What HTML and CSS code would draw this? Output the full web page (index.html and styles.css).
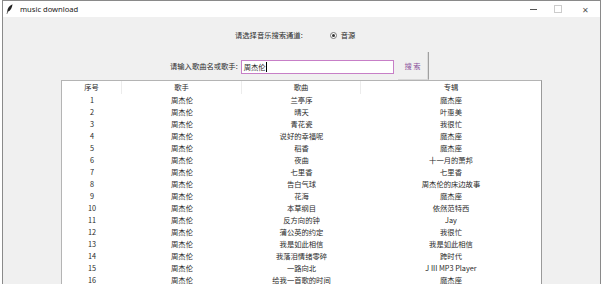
FILE: index.html
```html
<!DOCTYPE html>
<html>
<head>
<meta charset="utf-8">
<link rel="stylesheet" href="styles.css">
</head>
<body>
<div class="window">
  <div class="titlebar">
    <svg class="feather" width="7" height="10" viewBox="0 0 7 10"><path d="M6.5 0.3 C3.5 1.5 1.5 4 1.2 7.5 L0.6 9.8 L1.3 9.8 L1.8 7.8 C4.5 6.8 6.2 4 6.5 0.3 Z" fill="#222"/></svg>
    <span class="title">music download</span>
    <div class="controls">
      <span class="ctl min"></span>
      <span class="ctl max"></span>
      <span class="ctl close">✕</span>
    </div>
  </div>
  <div class="content">
    <div class="row-source">
      <span class="label">请选择音乐搜索通道:</span>
      <span class="radio"><span class="dot"></span></span>
      <span class="radio-text">音源</span>
    </div>
    <div class="row-search">
      <span class="label">请输入歌曲名或歌手:</span>
      <div class="entry">周杰伦<span class="caret"></span></div>
      <button class="search-btn">搜索</button>
    </div>
    <div class="table">
      <div class="thead">
        <div class="th">序号</div><div class="th">歌手</div><div class="th">歌曲</div><div class="th last">专辑</div>
      </div>
      <div class="tbody">
        <div class="td">1</div><div class="td">周杰伦</div><div class="td">兰亭序</div><div class="td">魔杰座</div>
        <div class="td">2</div><div class="td">周杰伦</div><div class="td">晴天</div><div class="td">叶惠美</div>
        <div class="td">3</div><div class="td">周杰伦</div><div class="td">青花瓷</div><div class="td">我很忙</div>
        <div class="td">4</div><div class="td">周杰伦</div><div class="td">说好的幸福呢</div><div class="td">魔杰座</div>
        <div class="td">5</div><div class="td">周杰伦</div><div class="td">稻香</div><div class="td">魔杰座</div>
        <div class="td">6</div><div class="td">周杰伦</div><div class="td">夜曲</div><div class="td">十一月的萧邦</div>
        <div class="td">7</div><div class="td">周杰伦</div><div class="td">七里香</div><div class="td">七里香</div>
        <div class="td">8</div><div class="td">周杰伦</div><div class="td">告白气球</div><div class="td">周杰伦的床边故事</div>
        <div class="td">9</div><div class="td">周杰伦</div><div class="td">花海</div><div class="td">魔杰座</div>
        <div class="td">10</div><div class="td">周杰伦</div><div class="td">本草纲目</div><div class="td">依然范特西</div>
        <div class="td">11</div><div class="td">周杰伦</div><div class="td">反方向的钟</div><div class="td">Jay</div>
        <div class="td">12</div><div class="td">周杰伦</div><div class="td">蒲公英的约定</div><div class="td">我很忙</div>
        <div class="td">13</div><div class="td">周杰伦</div><div class="td">我是如此相信</div><div class="td">我是如此相信</div>
        <div class="td">14</div><div class="td">周杰伦</div><div class="td">我落泪情绪零碎</div><div class="td">跨时代</div>
        <div class="td">15</div><div class="td">周杰伦</div><div class="td">一路向北</div><div class="td">J III MP3 Player</div>
        <div class="td">16</div><div class="td">周杰伦</div><div class="td">给我一首歌的时间</div><div class="td">魔杰座</div>
      </div>
    </div>
  </div>
</div>
</body>
</html>
```

FILE: styles.css
```css
html, body {
  margin: 0;
  padding: 0;
  width: 604px;
  height: 284px;
  overflow: hidden;
  background: #ffffff;
  font-family: "Noto Sans CJK SC", "Noto Sans", sans-serif;
  color: #2a2a2a;
}

.window {
  box-sizing: border-box;
  margin-left: 2px;
  width: 599px;
  height: 284px;
  border: 1px solid #8a8a8a;
  border-bottom: none;
  background: #f0f0f0;
  display: flex;
  flex-direction: column;
}

.titlebar {
  height: 16px;
  flex: none;
  background: #ffffff;
  display: flex;
  align-items: center;
  padding-left: 3px;
}

.feather {
  display: block;
}

.title {
  margin-left: 7px;
  font-family: "Noto Sans", sans-serif;
  font-size: 7.6px;
  color: #1a1a1a;
  line-height: 16px;
}

.controls {
  margin-left: auto;
  display: flex;
  align-items: center;
  height: 16px;
}

.ctl {
  height: 16px;
  display: flex;
  align-items: center;
  justify-content: center;
}

.min {
  width: 26px;
}

.min::before {
  content: "";
  width: 7px;
  height: 1px;
  background: #555;
}

.max {
  width: 24px;
}

.max::before {
  content: "";
  width: 6px;
  height: 6px;
  border: 1px solid #cccccc;
}

.close {
  width: 30px;
  font-size: 7.5px;
  color: #555;
}

.content {
  flex: 1;
  display: flex;
  flex-direction: column;
}

.row-source {
  height: 12px;
  margin-top: 12px;
  display: flex;
  align-items: center;
  padding-left: 232px;
}

.label {
  font-size: 7.3px;
  color: #2a2a2a;
  white-space: nowrap;
}

.radio {
  margin-left: 27px;
  width: 5px;
  height: 5px;
  border: 1px solid #777;
  border-radius: 50%;
  background: #fff;
  display: flex;
  align-items: center;
  justify-content: center;
}

.dot {
  width: 3px;
  height: 3px;
  border-radius: 50%;
  background: #333;
}

.radio-text {
  margin-left: 4px;
  font-size: 7.3px;
}

.row-search {
  margin-top: 11px;
  height: 28px;
  flex: none;
  display: flex;
  align-items: center;
  padding-left: 167px;
}

.entry {
  box-sizing: border-box;
  margin-left: 3px;
  width: 153px;
  height: 14px;
  border: 1px solid #c77fc7;
  background: #fff;
  font-size: 7.3px;
  line-height: 12px;
  padding-left: 2px;
  display: flex;
  align-items: center;
  margin-top: 1px;
}

.caret {
  width: 1px;
  height: 10px;
  background: #000;
}

.search-btn {
  box-sizing: border-box;
  margin-left: 4px;
  width: 31px;
  height: 28px;
  padding: 0 0 0 1px;
  background: #f0f0f0;
  border: none;
  border-right: 1px solid #a0a0a0;
  border-bottom: 1px solid #d8d8d8;
  box-shadow: inset -1px 0 0 #dcdcdc;
  color: #8a4f9a;
  font-family: "Noto Sans CJK SC", serif;
  font-size: 7.3px;
  letter-spacing: 1.5px;
}

.table {
  margin-left: 58px;
  width: 481px;
  flex: 1;
  background: #ffffff;
  border-top: 1px solid #b4b4b4;
  border-left: 1px solid #b4b4b4;
  border-right: 1px solid #9a9a9a;
  box-sizing: border-box;
  overflow: hidden;
}

.thead, .tbody {
  display: grid;
  grid-template-columns: 60px 120px 119px 1fr;
}

.th {
  height: 13px;
  line-height: 13px;
  text-align: center;
  font-size: 7.3px;
  border-right: 1px solid #ececec;
}

.th.last {
  border-right: none;
}

.td {
  height: 12px;
  line-height: 12px;
  text-align: center;
  font-size: 7.3px;
  white-space: nowrap;
  color: #2a2a2a;
}
```
